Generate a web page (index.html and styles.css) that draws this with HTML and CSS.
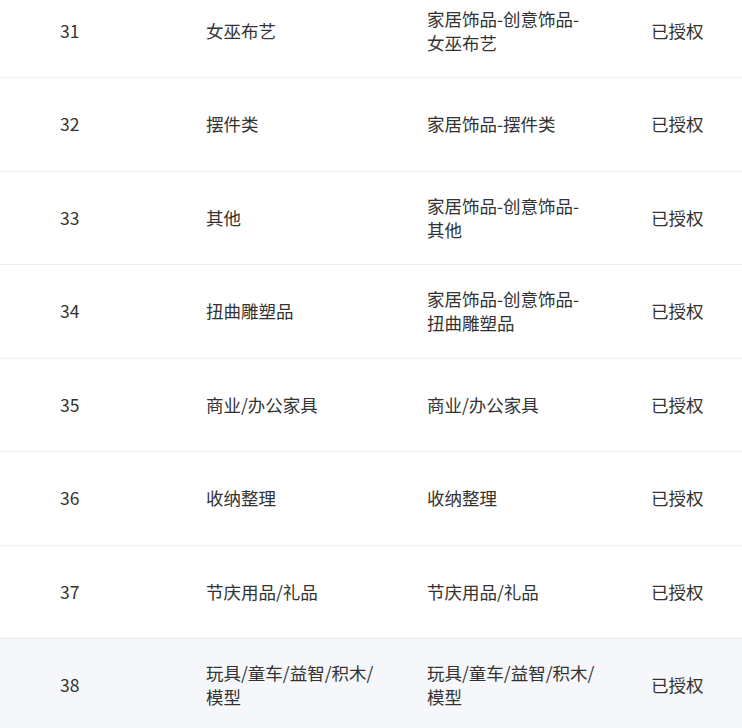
FILE: index.html
```html
<!DOCTYPE html>
<html lang="zh-CN">
<head>
<meta charset="utf-8">
<title>授权类目</title>
<link rel="stylesheet" href="styles.css">
</head>
<body>
<div class="table">
  <div class="row"><div class="cell idx">31</div><div class="cell">女巫布艺</div><div class="cell"><span class="seg">家居饰品-</span><span class="seg">创意饰品-</span><span class="seg">女巫布艺</span></div><div class="cell">已授权</div></div>
  <div class="row"><div class="cell idx">32</div><div class="cell">摆件类</div><div class="cell"><span class="seg">家居饰品-</span><span class="seg">摆件类</span></div><div class="cell">已授权</div></div>
  <div class="row"><div class="cell idx">33</div><div class="cell">其他</div><div class="cell"><span class="seg">家居饰品-</span><span class="seg">创意饰品-</span><span class="seg">其他</span></div><div class="cell">已授权</div></div>
  <div class="row"><div class="cell idx">34</div><div class="cell">扭曲雕塑品</div><div class="cell"><span class="seg">家居饰品-</span><span class="seg">创意饰品-</span><span class="seg">扭曲雕塑品</span></div><div class="cell">已授权</div></div>
  <div class="row"><div class="cell idx">35</div><div class="cell">商业/办公家具</div><div class="cell">商业/办公家具</div><div class="cell">已授权</div></div>
  <div class="row"><div class="cell idx">36</div><div class="cell">收纳整理</div><div class="cell">收纳整理</div><div class="cell">已授权</div></div>
  <div class="row"><div class="cell idx">37</div><div class="cell">节庆用品/礼品</div><div class="cell">节庆用品/礼品</div><div class="cell">已授权</div></div>
  <div class="row hover"><div class="cell idx">38</div><div class="cell">玩具/童车/益智/积木/模型</div><div class="cell">玩具/童车/益智/积木/模型</div><div class="cell">已授权</div></div>
</div>
</body>
</html>
```

FILE: styles.css
```css
html, body {
  margin: 0;
  padding: 0;
  background: #ffffff;
  overflow: hidden;
}
body {
  font-family: "Noto Sans CJK SC", "Noto Sans", sans-serif;
  font-size: 17.5px;
  line-height: 24px;
  color: #333333;
}
.table {
  margin-top: -15.5px;
}
.row {
  display: grid;
  grid-template-columns: 206px 221px 224px 1fr;
  align-items: center;
  height: 93.5px;
  box-sizing: border-box;
  border-bottom: 1px solid #ebeef5;
}
.row.hover {
  background: #f5f7fa;
}
.cell {
  max-width: 174px;
  word-break: break-all;
}
.seg {
  white-space: nowrap;
}
.idx {
  padding-left: 60px;
}
```
